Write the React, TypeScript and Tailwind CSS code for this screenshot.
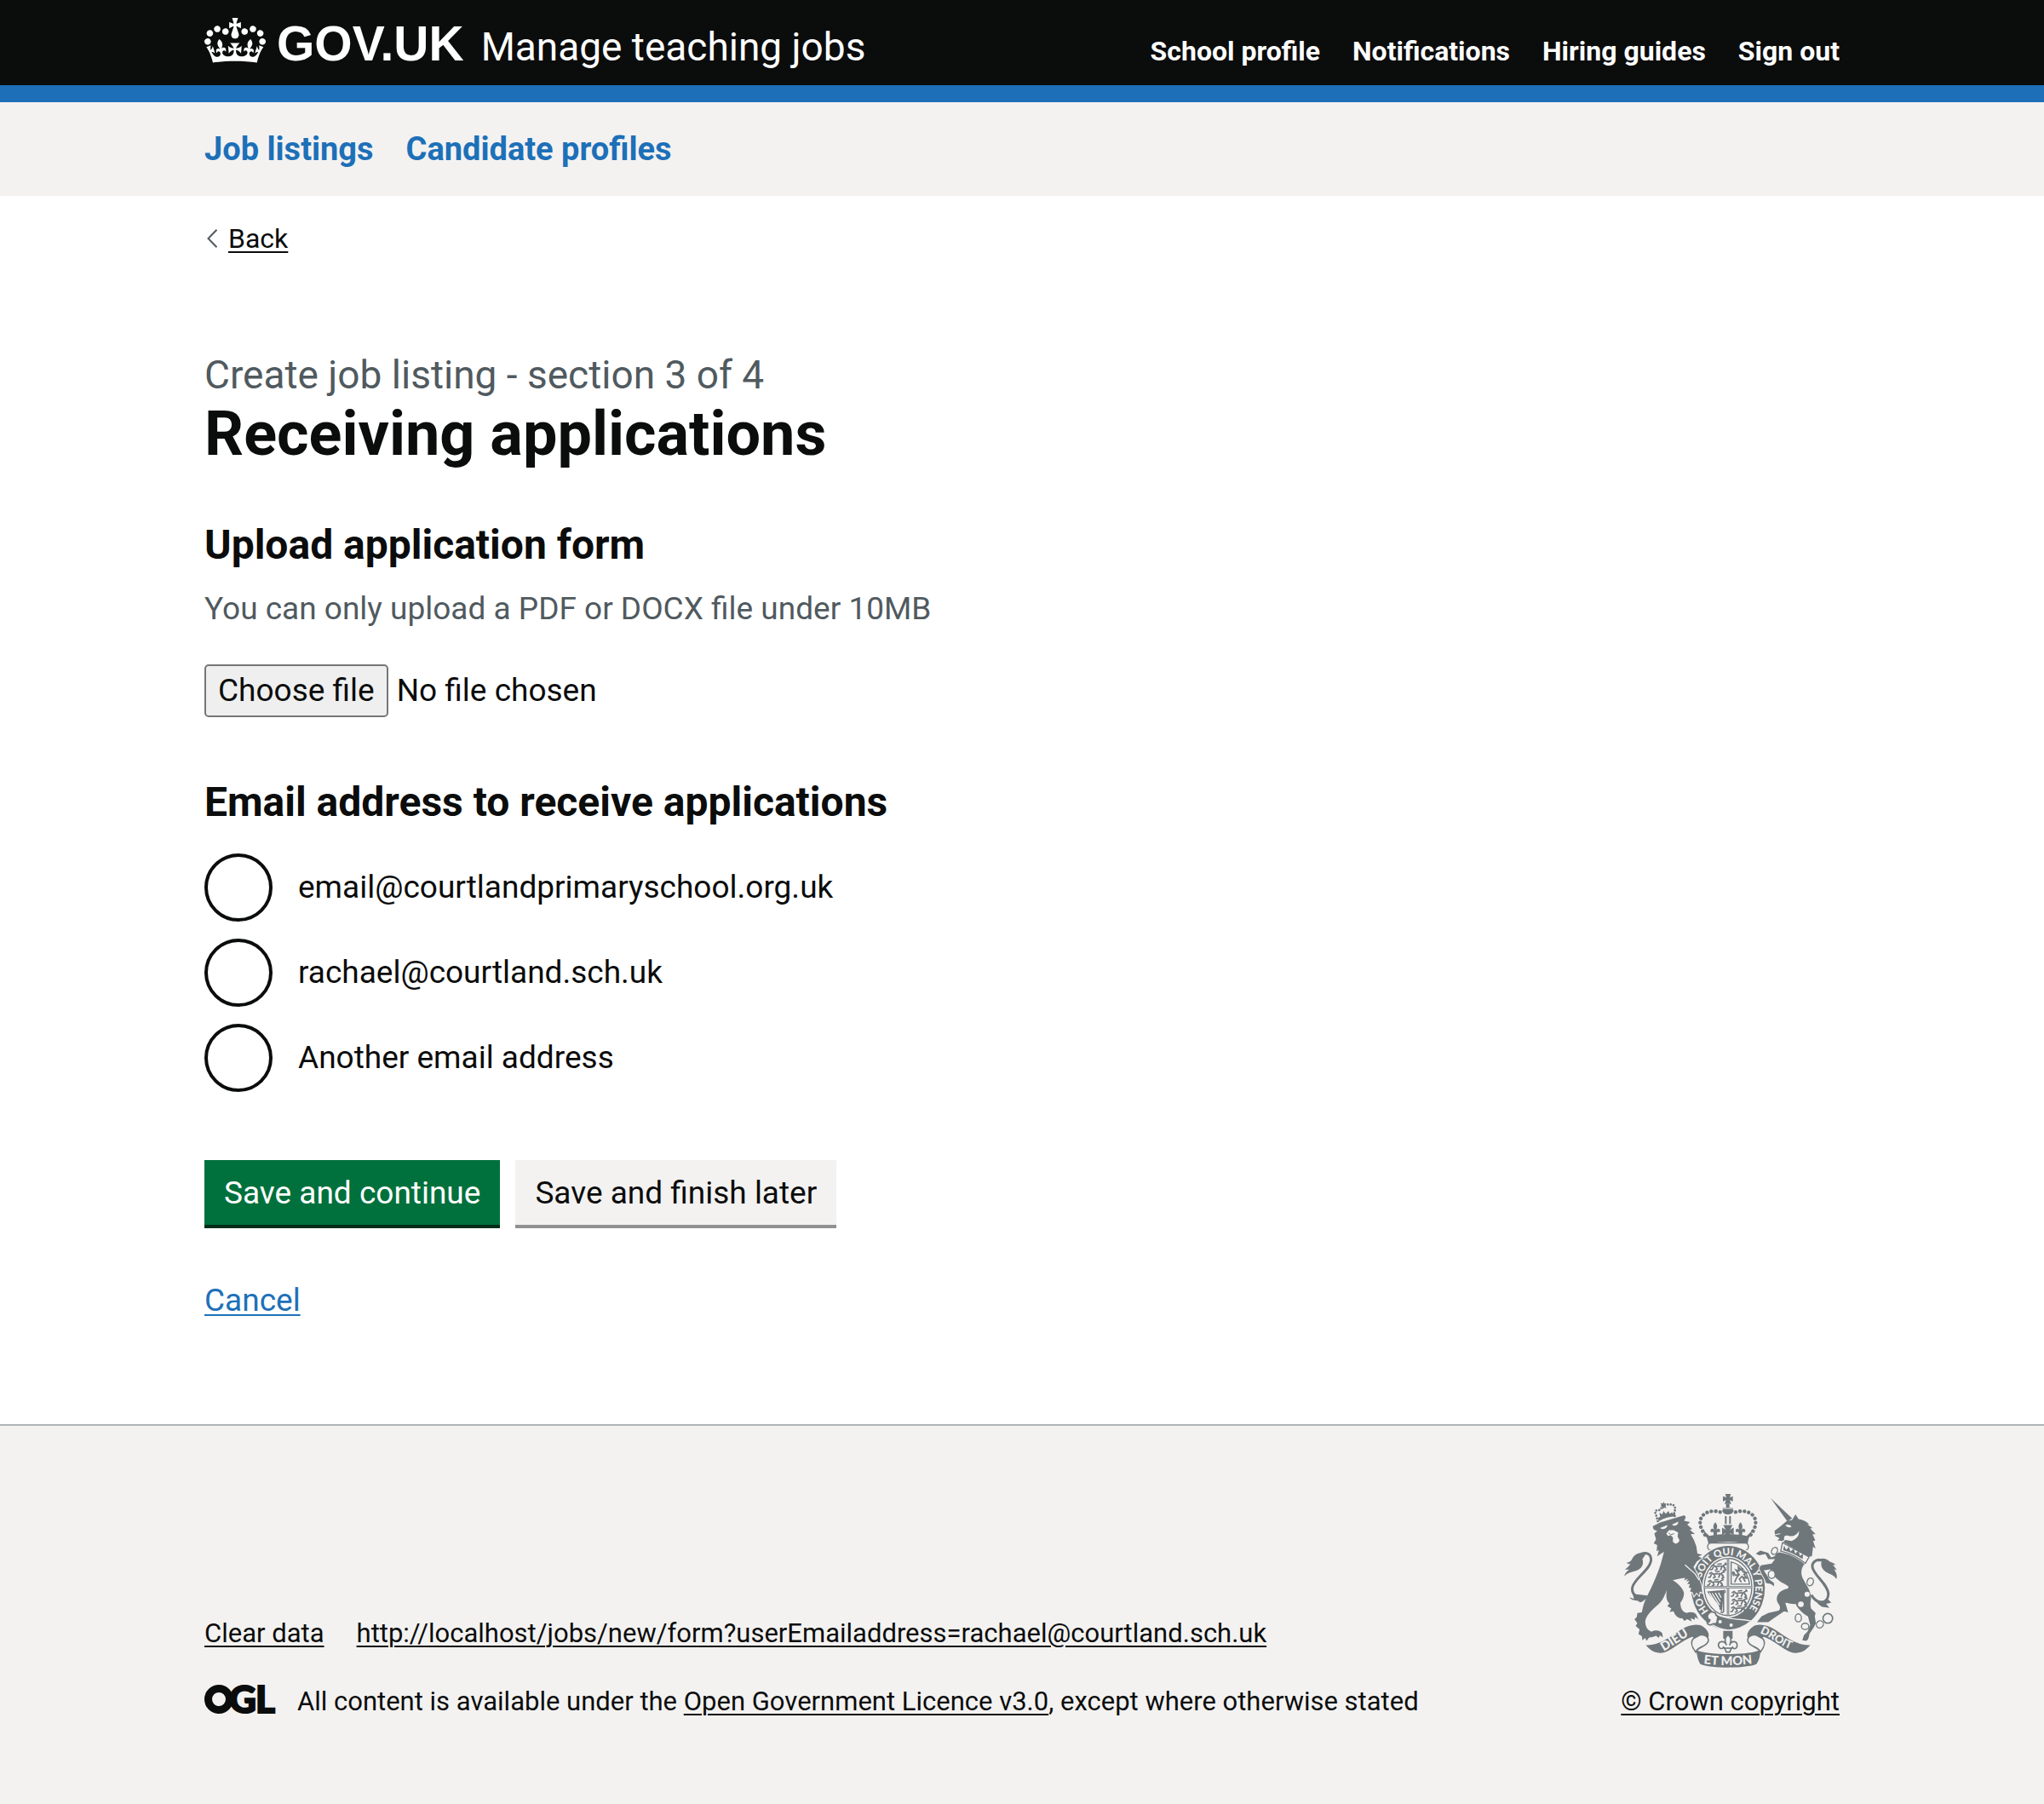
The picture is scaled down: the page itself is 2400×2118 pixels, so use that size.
import React, { useState } from "react";

const headerLinks = ["School profile", "Notifications", "Hiring guides", "Sign out"];
const serviceLinks = ["Job listings", "Candidate profiles"];
const emailOptions = [
  { id: "email-school", label: "email@courtlandprimaryschool.org.uk" },
  { id: "email-rachael", label: "rachael@courtland.sch.uk" },
  { id: "email-other", label: "Another email address" },
];

function Crown() {
  return (
    <svg viewBox="0 0 132 97" className="h-[53px] w-[72px] shrink-0 self-start" fill="currentColor" aria-hidden="true">
      <path
        fillRule="evenodd"
        d="M25 30.2c3.5 1.5 7.7-.2 9.1-3.7 1.5-3.6-.2-7.8-3.9-9.2-3.6-1.4-7.6.3-9.1 3.9-1.4 3.5.3 7.5 3.9 9zM9 39.5c3.6 1.5 7.8-.2 9.2-3.7 1.5-3.6-.2-7.8-3.9-9.1-3.6-1.5-7.6.2-9.1 3.8-1.4 3.5.3 7.5 3.8 9zM4.4 57.2c3.5 1.5 7.7-.2 9.1-3.8 1.5-3.6-.2-7.7-3.9-9.1-3.5-1.5-7.6.3-9.1 3.8-1.4 3.5.3 7.6 3.9 9.1zm38.3-21.4c3.5 1.5 7.7-.2 9.1-3.8 1.5-3.6-.2-7.7-3.9-9.1-3.6-1.5-7.6.3-9.1 3.8-1.3 3.6.4 7.7 3.9 9.1zm64.4-5.6c-3.6 1.5-7.8-.2-9.1-3.7-1.5-3.6.2-7.8 3.8-9.2 3.6-1.4 7.7.3 9.2 3.9 1.3 3.5-.4 7.5-3.9 9zm15.9 9.3c-3.6 1.5-7.7-.2-9.1-3.7-1.5-3.6.2-7.8 3.7-9.1 3.6-1.5 7.7.2 9.2 3.8 1.5 3.5-.3 7.5-3.8 9zm4.7 17.7c-3.6 1.5-7.8-.2-9.2-3.8-1.5-3.6.2-7.7 3.9-9.1 3.6-1.5 7.7.3 9.2 3.8 1.3 3.5-.4 7.6-3.9 9.1zM89.3 35.8c-3.6 1.5-7.8-.2-9.2-3.8-1.4-3.6.2-7.7 3.9-9.1 3.6-1.5 7.7.3 9.2 3.8 1.4 3.6-.3 7.7-3.9 9.1zM69.7 17.7l8.9 4.7V9.3l-8.9 2.8c-.2-.3-.5-.6-.9-.9L72.4 0H59.6l3.5 11.2c-.3.3-.6.5-.9.9l-8.8-2.8v13.1l8.8-4.7c.3.3.6.7.9.9l-5 15.4v.1c-.2.8-.4 1.6-.4 2.4 0 4.1 3.1 7.5 7 8.1h.2c.3 0 .7.1 1 .1.4 0 .7 0 1-.1h.2c4-.6 7.1-4.1 7.1-8.1 0-.8-.1-1.7-.4-2.4V34l-5.1-15.4c.4-.2.7-.6 1-.9zM66 92.8c16.9 0 32.8 1.1 47.1 3.2 4-16.9 8.9-26.7 14-33.5l-9.6-3.4c1 4.9 1.1 7.2 0 10.2-1.5-1.4-3-4.3-4.2-8.7L108.6 76c2.8-2 5-3.2 7.5-3.3-4.4 9.4-10 11.9-13.6 11.2-4.3-.8-6.3-4.6-5.6-7.9 1-4.7 5.7-5.9 8-.5 4.3-8.7-3-11.4-7.6-8.8 7.1-7.2 7.9-13.5 2.1-21.1-8 6.1-8.1 12.3-4.5 20.8-4.7-5.4-12.1-2.5-9.5 6.2 3.4-5.2 7.9-2 7.2 3.1-.6 4.3-6.4 7.8-13.5 7.2-10.3-.9-10.9-8-11.2-13.8 2.5-.5 7.1 1.8 11 7.3L80.2 60c-4.1 4.4-8 5.3-12.3 5.4 1.4-4.4 8-11.6 8-11.6H55.5s6.4 7.2 7.9 11.6c-4.2-.1-8-1-12.3-5.4l1.4 16.4c3.9-5.5 8.5-7.7 10.9-7.3-.3 5.8-.9 12.8-11.1 13.8-7.2.6-12.9-2.9-13.5-7.2-.7-5 3.8-8.3 7.1-3.1 2.7-8.7-4.6-11.6-9.4-6.2 3.7-8.5 3.6-14.7-4.6-20.8-5.8 7.6-5 13.9 2.2 21.1-4.7-2.6-11.9.1-7.7 8.8 2.3-5.5 7.1-4.2 8.1.5.7 3.3-1.3 7.1-5.7 7.9-3.5.7-9-1.8-13.5-11.2 2.5.1 4.7 1.3 7.5 3.3l-4.7-15.4c-1.2 4.4-2.7 7.2-4.3 8.7-1.1-3-.9-5.3 0-10.2l-9.5 3.4c5 6.9 9.9 16.7 14 33.5 14.8-2.1 30.8-3.2 47.7-3.2z"
      />
    </svg>
  );
}

function OglMark() {
  return (
    <svg
      viewBox="0 0 82 34"
      className="h-[34px] w-[82px] shrink-0 overflow-visible font-[Lato,sans-serif] text-[44px] font-black"
      fill="currentColor"
      stroke="currentColor"
      strokeWidth="2"
      role="img"
      aria-label="Open Government Licence"
    >
      <circle cx="17" cy="17" r="12.500" fill="none" strokeWidth="9" />
      <text x="29" y="33">G</text>
      <text x="60" y="33">L</text>
    </svg>
  );
}

function Fleur({ x, y }: { x: number; y: number }) {
  return (
    <path
      transform={`translate(${x} ${y})`}
      d="M0 -26 C-9 -16 -8 -8 -3 2 C-8 -6 -17 -5 -17 4 C-17 10 -10 11 -9 6 C-6 10 -5 14 -6 22 L6 22 C5 14 6 10 9 6 C10 11 17 10 17 4 C17 -5 8 -6 3 2 C8 -8 9 -16 0 -26Z"
    />
  );
}

function PassantLion({ x, y }: { x: number; y: number }) {
  return (
    <path
      transform={`translate(${x} ${y})`}
      fill="none"
      strokeWidth="5"
      strokeLinecap="round"
      strokeLinejoin="round"
      d="M2 -2 L9 -6 L14 0 L42 -2 L50 6 M8 2 L4 10 L-1 11 M18 2 L22 10 L15 13 M38 2 L34 11 M46 4 L52 12 L46 14 M44 -4 L54 -8 L50 -12 M24 -8 L36 -9"
    />
  );
}

function RoyalArms() {
  const ink = "#6f777b";
  const paper = "#f3f2f1";
  return (
    <svg
      viewBox="72 42 750 613"
      className="h-[204px] w-[250px] font-[Lato,sans-serif] font-black"
      fill={ink}
      stroke="none"
      role="img"
      aria-label="Royal coat of arms"
    >
      {/* imperial crown */}
      <path d="M428 42h20l-4 12 11-4v18l-11-4 5 13h-23l5-13-11 4V50l12 4z" />
      <path d="M431 78h12v12h13c0 8-2 12-5 16h-27c-3-4-5-8-5-16h12z" />
      <path d="M418 93h39" stroke={paper} strokeWidth="3" />
      <path d="M417 98h41c-2 12-10 16-20 16s-19-4-21-16z" />
      <g fill="none" stroke={ink} strokeLinecap="round" strokeWidth="13">
        <path d="M410 106C385 98 355 104 343 126C334 148 344 168 358 188" strokeDasharray="0.1 15.4" />
        <path d="M465 106C490 98 520 104 532 126C541 148 531 168 517 188" strokeDasharray="0.1 15.4" />
      </g>
      <path d="M430 120v28M445 120v28" stroke={ink} strokeWidth="6" />
      <path d="M421 152h33l-9 16 13-7v26l-13-7 5 16h-26l5-16-12 7v-26l13 7z" />
      <Fleur x={393} y={168} />
      <Fleur x={482} y={168} />
      <path d="M352 168c6 10 12 14 20 22 24-5 42-6 66-6s42 1 66 6c8-8 13-12 19-22-1 12-6 22-12 30l-4 20c-45-9-94-9-138 0l-5-20c-6-8-11-18-12-30z" />
      <rect x="366" y="215" width="144" height="26" rx="13" fill={paper} stroke={ink} strokeWidth="4" />

      {/* garter and motto */}
      <ellipse cx="438" cy="373" rx="133" ry="152" fill={paper} />
      <ellipse cx="438" cy="373" rx="130" ry="148" />
      <ellipse cx="438" cy="370" rx="91" ry="108" fill={paper} />
      <ellipse cx="438" cy="370" rx="84" ry="101" fill="none" stroke={ink} strokeWidth="4" />
      <path id="garter-motto" d="M343 340A98 116 0 1 1 500 462" fill="none" />
      <path id="garter-start" d="M378 464A98 116 0 0 1 340 372" fill="none" />
      <g fontSize="35" fill={paper}>
        <text><textPath href="#garter-motto" startOffset="2">SOIT QUI MAL Y PENSE</textPath></text>
        <text><textPath href="#garter-start" startOffset="12">HO</textPath></text>
      </g>

      {/* quartered shield */}
      <path d="M438 268V470M355 371H522" stroke={ink} strokeWidth="8" />
      <path d="M438 268V470M355 371H522" stroke={paper} strokeWidth="2" />
      <g stroke={ink}>
        <PassantLion x={378} y={298} />
        <PassantLion x={371} y={325} />
        <PassantLion x={367} y={353} />
        <PassantLion x={451} y={392} />
        <PassantLion x={451} y={419} />
        <PassantLion x={449} y={446} />
      </g>
      <path d="M449 282C478 288 508 316 514 360L449 360Z" fill="none" stroke={ink} strokeWidth="4" />
      <path
        d="M458 330C450 318 458 312 460 322C464 332 470 332 474 322L466 310L476 314L474 300L484 308L492 318L504 320L494 326L504 338L490 336L498 350M488 332L478 342L484 352M478 326L468 338L462 352M476 312L490 306"
        fill="none"
        stroke={ink}
        strokeWidth="5"
        strokeLinecap="round"
      />
      <path d="M364 386L424 381L416 457L408 448C406 422 382 414 364 386Z" />
      <path d="M382 392L408 434M393 391L411 422M404 390L414 408M372 390L406 444" stroke={paper} strokeWidth="4" />
      <path d="M424 381c6 4 4 10-2 10v66c0 4-8 4-10 0" fill="none" stroke={ink} strokeWidth="5" />

      {/* buckle and strap */}
      <path d="M384 458C410 478 450 484 494 486L520 490C496 512 462 524 434 522C410 520 392 510 376 500Z" stroke={paper} strokeWidth="4" />
      <path d="M372 462c10-8 24-2 24 8l6 4-4 24-14 2c-8 8-20 2-20-6 6 2 10-2 10-8-10-2-12-18-2-24z" fill={paper} stroke={ink} strokeWidth="5" />
      <circle cx="410" cy="493" r="6" fill={paper} />
      <circle cx="449" cy="505" r="6" fill={paper} />

      {/* lion */}
      <path
        stroke={paper}
        strokeWidth="6"
        paintOrder="stroke"
        d="M172 156L198 143L284 117L289 124L283 137L304 141L294 150L312 166L303 168L321 183L306 184L317 203L326 226L330 252L347 256L333 263L346 268L328 280L316 300L332 330L344 366L347 390L338 386L336 400L327 390L318 402L313 388L304 386L308 374L299 372L304 360L294 360L302 348L290 351L297 341L283 347L287 338C270 340 255 344 243 346C262 358 276 372 282 388C284 402 277 416 270 426C270 444 276 458 292 462C306 456 322 460 326 468L333 484L322 476L320 486L306 480L310 492L294 484L284 490L276 480C262 484 248 466 246 456L232 458L238 446L224 438L231 428C219 418 219 398 222 380C214 402 208 416 192 432C168 452 148 472 146 492C146 508 152 522 168 528C184 520 200 524 206 534L208 548L198 541L193 550L184 542L172 547L160 548L150 560L146 550L136 558L134 544L122 536L126 520L112 508L118 498L108 484L116 476L118 462L134 460C140 420 156 398 172 362C186 330 200 296 208 262L212 246L202 252L188 262L194 240L186 243L188 222L176 216L184 202L178 182L188 172L176 168Z"
      />
      <path d="M286 292L322 324L336 346" fill="none" stroke={paper} strokeWidth="4" />
      <path d="M198 162L224 152C224 164 210 170 198 162ZM240 150L262 140C264 152 250 158 240 150Z" fill={paper} />
      <path d="M220 182L230 170L246 170L262 178L260 192L267 206L262 214L252 218L243 210L244 196L236 188L226 190Z" fill={paper} />
      <path d="M228 180l8 6 12-4" fill="none" stroke={ink} strokeWidth="3" />
      <path d="M190 138L184 116C178 104 182 98 192 100C200 98 204 92 204 84C216 80 236 76 246 82C254 90 252 98 248 106L250 122" fill="none" stroke={ink} strokeWidth="8" strokeDasharray="0.1 10" strokeLinecap="round" />
      <path d="M190 127C208 116 228 110 250 110L254 121C232 122 212 127 194 138Z" />
      <path d="M200 74l8 2 2-6 4 6 6-1-3 9 4 8-8-2-6 5-1-8zM198 122l-2-14 10 6 4-12 8 10 10-10 4 10 10-6-2 12z" />
      <path d="M152 408C120 412 98 400 100 374C104 340 172 306 166 268C162 246 136 246 120 262" fill="none" stroke={ink} strokeWidth="9" />
      <path d="M148 254C128 244 108 252 98 274C92 284 80 284 80 284C84 290 90 290 94 288C88 298 80 306 74 308C82 310 86 308 90 307C84 314 74 320 72 332C84 320 96 318 110 314C134 308 142 290 136 272Z" />
      <path d="M102 394L106 412L90 406C96 416 110 418 118 418L128 424C142 420 150 410 154 400Z" />

      {/* unicorn */}
      <path d="M588 56L664 128L648 140Z" />
      <path d="M602 172C618 160 630 150 644 138L664 134L676 114L687 131C706 134 718 142 724 150L717 149L736 162L728 164L747 184L736 184L746 206L738 208L747 234L738 228L734 262L724 262L690 246L632 212L640 204L662 208C682 200 690 188 688 172C682 186 668 194 652 190C640 186 634 190 636 204L628 208L612 206L620 198L604 190Z" />
      <path d="M640 152c10-4 18-2 22 6-8 4-16 2-22-6z" fill={paper} />
      <path d="M604 186l18-4" stroke={paper} strokeWidth="3" />
      <path
        stroke={paper}
        strokeWidth="6"
        paintOrder="stroke"
        d="M618 248C650 252 684 268 708 290C694 304 694 326 704 344C716 366 730 382 731 410C728 424 728 436 731 446L747 462L744 474L748 498L740 514L726 534C722 550 722 556 714 560L700 558L706 540L718 528L728 504L720 474C704 466 686 450 676 430C660 432 644 424 640 426L650 460L636 456L600 480L580 494L540 494L556 474L580 462L616 454C626 446 620 436 616 430C600 404 620 380 648 376C654 370 652 368 642 362C620 352 602 338 594 318L586 308L564 312L576 330L584 344L600 356L600 368L590 360L572 356L568 344L556 322L548 304L554 294L592 288L604 272L592 272L580 272L570 254L548 258L536 252L552 242L580 250L590 266L602 262C606 254 612 250 618 248Z"
      />
      <path d="M630 214L724 264L711 287C680 262 650 250 624 244Z" fill={paper} stroke={ink} strokeWidth="4" />
      <path d="M632 240l4-16 7 15 10-11 5 17 12-10 5 17 12-10 4 18 12-6-2 18C678 256 654 246 632 240Z" />
      <g fill={paper} stroke={ink} strokeWidth="4">
        <ellipse cx="602" cy="243" rx="10" ry="13" transform="rotate(30 602 243)" />
        <ellipse cx="592" cy="326" rx="12" ry="14" />
        <ellipse cx="728" cy="352" rx="11" ry="14" transform="rotate(20 728 352)" />
        <ellipse cx="686" cy="479" rx="11" ry="14" />
        <ellipse cx="710" cy="509" rx="13" ry="11" />
        <ellipse cx="762" cy="502" rx="12" ry="13" transform="rotate(40 762 502)" />
      </g>
      <circle cx="790" cy="481" r="17" fill="none" stroke={ink} strokeWidth="5" />
      <circle cx="717" cy="396" r="9" fill={paper} />
      <circle cx="695" cy="431" r="10" fill={paper} />
      <path d="M732 398C750 432 790 432 792 396C792 362 742 330 736 302C732 282 752 270 768 276" fill="none" stroke={ink} strokeWidth="9" />
      <path d="M744 280C764 264 786 268 796 280C806 284 812 286 818 292L808 292L822 310L812 308C822 322 824 334 820 342C812 326 796 326 782 316C768 306 764 292 768 280Z" />
      <path d="M742 406C748 424 760 434 770 440L796 444L784 430L802 426L790 412C780 424 760 424 742 406Z" />

      {/* ribbon */}
      <path d="M148 575C190 578 226 552 270 522C300 502 334 498 350 510C366 522 374 536 368 550C352 540 336 546 322 552L312 546C268 560 236 602 200 603C180 602 164 594 148 575Z" />
      <path d="M728 575C686 578 650 552 606 522C576 502 542 498 526 510C510 522 502 536 508 550C524 540 540 546 554 552L564 546C608 560 640 602 676 603C696 602 712 594 728 575Z" />
      <path d="M338 540C352 536 372 546 368 562C362 582 330 580 324 600C308 580 306 562 316 552Z" fill={paper} stroke={ink} strokeWidth="5" />
      <path d="M538 540C524 536 504 546 508 562C514 582 546 580 552 600C568 580 570 562 560 552Z" fill={paper} stroke={ink} strokeWidth="5" />
      <path d="M326 592C360 612 516 612 552 592C552 616 546 632 538 642C500 658 378 658 340 642C332 630 328 612 326 592Z" />
      <path id="ribbon-left" d="M210 597C245 578 280 550 330 526" fill="none" />
      <path id="ribbon-right" d="M549 532C590 546 620 582 680 596" fill="none" />
      <path id="ribbon-centre" d="M346 640Q438 652 536 639" fill="none" />
      <g fill={paper} fontSize="44">
        <text><textPath href="#ribbon-left" startOffset="1">DIEU</textPath></text>
        <text fontSize="39"><textPath href="#ribbon-right" startOffset="1">DROIT</textPath></text>
        <text><textPath href="#ribbon-centre" startOffset="6">ET MON</textPath></text>
      </g>
      <path d="M421 525h33v28h-33z" />
      <g fill={paper} stroke={ink} strokeWidth="5" strokeLinejoin="round">
        <path d="M438 538C424 550 426 562 432 574C426 558 404 560 404 576C406 590 420 590 422 582L428 590L432 600H444L448 590L454 582C456 590 470 590 470 576C470 560 450 558 444 574C450 562 452 550 438 538Z" />
        <path d="M424 586H452" />
      </g>
    </svg>
  );
}

const linkUnderline = "underline decoration-2 underline-offset-4";

export default function App() {
  const [email, setEmail] = useState("");
  const [fileName, setFileName] = useState("");
  return (
    <div className="flex min-h-screen flex-col bg-white font-[Roboto,sans-serif] text-[#0b0c0c]">
      <header>
        <div className="border-b-[20px] border-[#1d70b8] bg-[#0b0c0c] text-white">
          <div className="mx-auto flex w-full max-w-[1984px] items-baseline px-8 pt-[21px] pb-[19px]">
            <a href="#home" className="flex items-baseline">
              <Crown />
              <span className="ml-[13px] font-['Liberation_Sans',sans-serif] text-[57px] leading-[60px] font-bold">GOV.UK</span>
            </a>
            <a href="#service" className="ml-5 text-[46px] leading-none">Manage teaching jobs</a>
            <nav aria-label="Account" className="ml-auto flex gap-[38px] text-[32px] leading-none font-bold">
              {headerLinks.map((label) => (
                <a key={label} href="#account">{label}</a>
              ))}
            </nav>
          </div>
        </div>
        <nav aria-label="Service" className="bg-[#f3f2f1]">
          <div className="mx-auto flex w-full max-w-[1984px] gap-[38px] px-8 py-[30px] text-[38px] leading-[50px] font-bold text-[#1d70b8]">
            {serviceLinks.map((label) => (
              <a key={label} href="#section">{label}</a>
            ))}
          </div>
        </nav>
      </header>

      <main className="mx-auto w-full max-w-[1984px] grow px-8 pt-[30px] pb-[120px]">
        <a href="#back" className="flex items-center gap-[13px] text-[32px] leading-[40px]">
          <svg viewBox="0 0 12 22" className="ml-[3px] h-[22px] w-3" fill="none" stroke="#505a5f" strokeWidth="2" aria-hidden="true">
            <path d="M11.500 .8L1.500 11l10 10.200" />
          </svg>
          <span className={linkUnderline}>Back</span>
        </a>

        <form onSubmit={(event) => event.preventDefault()}>
          <p className="mt-[110px] text-[46px] leading-[60px] text-[#505a5f]">Create job listing - section 3 of 4</p>
          <h1 className="text-[72px] leading-[80px] font-bold">Receiving applications</h1>

          <h2 className="mt-[60px] text-[48px] leading-[60px] font-bold">Upload application form</h2>
          <p id="application-form-hint" className="mt-5 text-[37px] leading-[50px] text-[#505a5f]">
            You can only upload a PDF or DOCX file under 10MB
          </p>
          <div className="mt-10 flex items-center gap-[10px] text-[37px] leading-[50px]">
            <input
              id="application-form"
              type="file"
              aria-describedby="application-form-hint"
              className="peer sr-only"
              onChange={(event) => setFileName(event.target.files?.[0]?.name ?? "")}
            />
            <label
              htmlFor="application-form"
              className="rounded-[5px] border-2 border-[#767676] bg-[#efefef] px-[14px] py-1 peer-focus-visible:outline-4"
            >
              Choose file
            </label>
            <span>{fileName || "No file chosen"}</span>
          </div>

          <fieldset className="mt-[70px]">
            <legend className="text-[48px] leading-[60px] font-bold">Email address to receive applications</legend>
            <div className="mt-[30px] flex flex-col gap-5">
              {emailOptions.map(({ id, label }) => (
                <div key={id} className="flex items-center gap-[30px]">
                  <input
                    id={id}
                    type="radio"
                    name="email"
                    value={id}
                    checked={email === id}
                    onChange={() => setEmail(id)}
                    className="size-20 shrink-0 appearance-none rounded-full border-4 border-[#0b0c0c] bg-white checked:bg-[#0b0c0c] checked:shadow-[inset_0_0_0_16px_white]"
                  />
                  <label htmlFor={id} className="text-[37px] leading-[50px]">{label}</label>
                </div>
              ))}
            </div>
          </fieldset>

          <div className="mt-20 flex gap-[18px] text-[37px] leading-[50px]">
            <button type="submit" className="border-b-4 border-[#002d18] bg-[#00703c] px-[23px] pt-[14px] pb-3 text-white">
              Save and continue
            </button>
            <button type="button" className="border-b-4 border-[#929191] bg-[#f3f2f1] px-[23px] pt-[14px] pb-3">
              Save and finish later
            </button>
          </div>
        </form>

        <p className="mt-[60px] text-[37px] leading-[50px]">
          <a href="#cancel" className="text-[#1d70b8] underline decoration-2 underline-offset-4">Cancel</a>
        </p>
      </main>

      <footer className="border-t-2 border-[#b1b4b6] bg-[#f3f2f1]">
        <div className="mx-auto flex w-full max-w-[1984px] items-end justify-between px-8 pt-20 pb-[100px] text-[31px] leading-[40px]">
          <div className="flex flex-col gap-10">
            <div className="flex gap-[38px]">
              <a href="#clear" className={linkUnderline}>Clear data</a>
              <a href="#debug" className={linkUnderline}>
                http://localhost/jobs/new/form?userEmailaddress=rachael@courtland.sch.uk
              </a>
            </div>
            <div className="flex gap-[27px]">
              <OglMark />
              <p>
                All content is available under the{" "}
                <a href="#licence" className={linkUnderline}>Open Government Licence v3.0</a>, except where otherwise stated
              </p>
            </div>
          </div>
          <a href="#copyright" className="flex flex-col items-center gap-5">
            <RoyalArms />
            <span className={linkUnderline}>© Crown copyright</span>
          </a>
        </div>
      </footer>
    </div>
  );
}
